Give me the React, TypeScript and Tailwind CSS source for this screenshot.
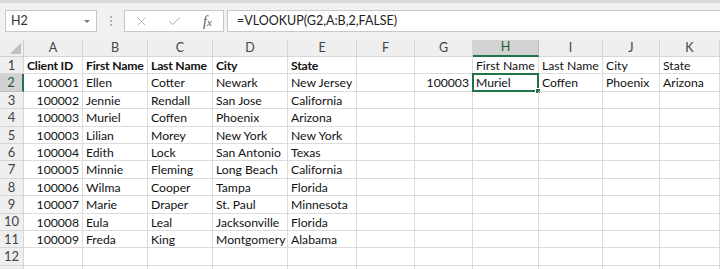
import React from 'react'
import { Check, X } from 'lucide-react'

const columns = ['A', 'B', 'C', 'D', 'E', 'F', 'G', 'H', 'I', 'J', 'K']

type Cell = { text?: string; bold?: boolean; num?: boolean }

const clients: Array<[string, string, string, string, string]> = [
  ['100001', 'Ellen', 'Cotter', 'Newark', 'New Jersey'],
  ['100002', 'Jennie', 'Rendall', 'San Jose', 'California'],
  ['100003', 'Muriel', 'Coffen', 'Phoenix', 'Arizona'],
  ['100003', 'Lilian', 'Morey', 'New York', 'New York'],
  ['100004', 'Edith', 'Lock', 'San Antonio', 'Texas'],
  ['100005', 'Minnie', 'Fleming', 'Long Beach', 'California'],
  ['100006', 'Wilma', 'Cooper', 'Tampa', 'Florida'],
  ['100007', 'Marie', 'Draper', 'St. Paul', 'Minnesota'],
  ['100008', 'Eula', 'Leal', 'Jacksonville', 'Florida'],
  ['100009', 'Freda', 'King', 'Montgomery', 'Alabama'],
]

const buildRows = (): Cell[][] => {
  const rows: Cell[][] = []
  rows.push([
    ...['Client ID', 'First Name', 'Last Name', 'City', 'State'].map((text) => ({ text, bold: true })),
    {},
    {},
    ...['First Name', 'Last Name', 'City', 'State'].map((text) => ({ text })),
  ])
  clients.forEach(([id, first, last, city, state], i) => {
    const row: Cell[] = [{ text: id, num: true }, { text: first }, { text: last }, { text: city }, { text: state }, {}]
    if (i === 0) {
      row.push({ text: '100003', num: true }, { text: 'Muriel' }, { text: 'Coffen' }, { text: 'Phoenix' }, { text: 'Arizona' })
    } else {
      row.push({}, {}, {}, {}, {})
    }
    rows.push(row)
  })
  rows.push(Array.from({ length: 11 }, () => ({})))
  rows.push(Array.from({ length: 11 }, () => ({})))
  return rows
}

const FormulaBar: React.FC = () => (
  <div className="flex items-center h-[22px] mt-[7px] pl-[5px]">
    <div className="w-[92px] h-full bg-white border border-[#c8c8c8] flex items-center justify-between pl-[5px] pr-[6px]">
      <span className="text-[12.5px] text-[#333]">H2</span>
      <span className="w-0 h-0 border-l-[3px] border-r-[3px] border-t-[3px] border-l-transparent border-r-transparent border-t-[#777]" />
    </div>
    <div className="w-[27px] flex flex-col items-center gap-[2px]">
      <span className="w-[2px] h-[2px] bg-[#b0b0b0]" />
      <span className="w-[2px] h-[2px] bg-[#b0b0b0]" />
      <span className="w-[2px] h-[2px] bg-[#b0b0b0]" />
    </div>
    <div className="w-[100px] h-full bg-white border border-[#c8c8c8] flex items-center pl-[9px]">
      <X size={15} strokeWidth={1.3} className="text-[#a8a8a8]" />
      <Check size={15} strokeWidth={1.6} className="text-[#a8a8a8] ml-[18px]" />
      <span className="ml-[21px] italic text-[14px] text-[#555]" style={{ fontFamily: '"Liberation Serif", serif' }}>
        f<span className="text-[11px]">x</span>
      </span>
    </div>
    <div className="flex-1 h-full ml-[3px] bg-white border border-r-0 border-[#c8c8c8] flex items-center pl-[9px]">
      <span className="text-[12.5px] text-[#222]">=VLOOKUP(G2,A:B,2,FALSE)</span>
    </div>
  </div>
)

const Sheet: React.FC = () => {
  const rows = buildRows()
  return (
    <div className="mt-[8px] grid grid-cols-[24px_59px_65px_65px_75px_69px_58px_58px_66px_64px_57px_1fr] grid-rows-[17px_repeat(13,17.4px)] bg-white">
      <div className="bg-[#efefef] border-r border-b border-[#cfcfcf] relative">
        <span className="absolute right-[2px] bottom-[2px] w-0 h-0 border-solid border-t-[11px] border-t-transparent border-r-[11px] border-r-[#bfbfbf]" />
      </div>
      {columns.map((col) => (
        <div
          key={col}
          className={
            col === 'H'
              ? 'bg-[#d2d2d2] border-r border-[#bdbdbd] border-b-2 border-b-[#217346] flex items-center justify-center text-[12.5px] text-[#1d5c3b]'
              : 'bg-[#efefef] border-r border-b border-[#d6d6d6] flex items-center justify-center text-[12.5px] text-[#444]'
          }
        >
          {col}
        </div>
      ))}
      {rows.map((row, r) => (
        <React.Fragment key={r}>
          <div
            className={
              r === 1
                ? 'bg-[#d2d2d2] border-b border-[#bdbdbd] border-r-2 border-r-[#217346] flex items-center justify-center pt-px text-[13px] text-[#1d5c3b]'
                : 'bg-[#efefef] border-r border-b border-[#d6d6d6] flex items-center justify-center pt-px text-[13px] text-[#444]'
            }
          >
            {r < 12 ? r + 1 : ''}
          </div>
          {row.map((cell, c) => (
            <div
              key={c}
              className={`relative border-r border-b border-[#dcdcdc] flex items-center px-[3px] pt-[2px] text-[12.2px] text-[#111] whitespace-nowrap ${
                cell.num ? 'justify-end' : ''
              } ${cell.bold ? 'font-bold tracking-[-0.2px]' : ''}`}
            >
              {cell.text}
              {r === 1 && c === 7 && (
                <span className="absolute -left-px -top-px -right-px -bottom-px border-2 border-[#217346]">
                  <span className="absolute -right-[4px] -bottom-[4px] w-[6px] h-[6px] bg-[#217346] border border-white" />
                </span>
              )}
            </div>
          ))}
        </React.Fragment>
      ))}
    </div>
  )
}

export default function App() {
  return (
    <div className="w-[720px] h-[269px] overflow-hidden bg-[#f1f1f1]" style={{ fontFamily: 'Lato, "Open Sans", sans-serif' }}>
      <div className="h-[3px] bg-[#d8d8d8]" />
      <FormulaBar />
      <Sheet />
    </div>
  )
}
